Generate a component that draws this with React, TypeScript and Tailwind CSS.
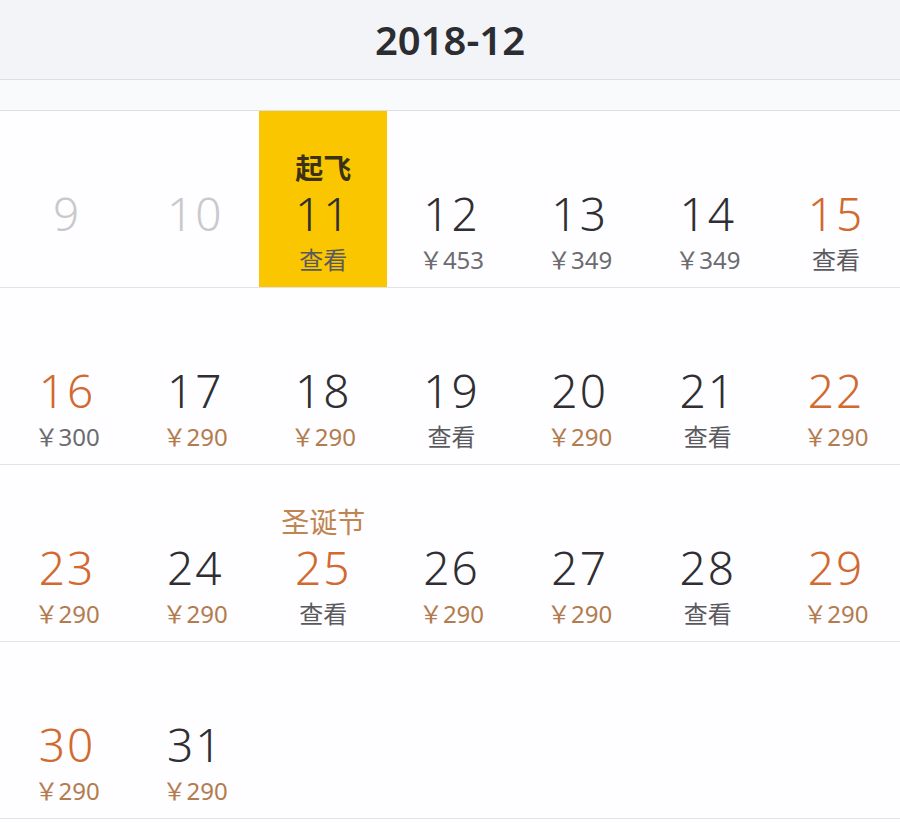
import React from "react";

type Cell = {
  day?: number;
  label?: string;
  labelKind?: "dark" | "orange";
  price?: string;
  priceKind?: "grey" | "orange" | "view";
  numKind?: "dark" | "orange" | "faded";
  highlight?: boolean;
};

const rows: Cell[][] = [
  [
    { day: 9, numKind: "faded" },
    { day: 10, numKind: "faded" },
    { day: 11, numKind: "dark", label: "起飞", labelKind: "dark", price: "查看", priceKind: "view", highlight: true },
    { day: 12, numKind: "dark", price: "￥453", priceKind: "grey" },
    { day: 13, numKind: "dark", price: "￥349", priceKind: "grey" },
    { day: 14, numKind: "dark", price: "￥349", priceKind: "grey" },
    { day: 15, numKind: "orange", price: "查看", priceKind: "view" },
  ],
  [
    { day: 16, numKind: "orange", price: "￥300", priceKind: "grey" },
    { day: 17, numKind: "dark", price: "￥290", priceKind: "orange" },
    { day: 18, numKind: "dark", price: "￥290", priceKind: "orange" },
    { day: 19, numKind: "dark", price: "查看", priceKind: "view" },
    { day: 20, numKind: "dark", price: "￥290", priceKind: "orange" },
    { day: 21, numKind: "dark", price: "查看", priceKind: "view" },
    { day: 22, numKind: "orange", price: "￥290", priceKind: "orange" },
  ],
  [
    { day: 23, numKind: "orange", price: "￥290", priceKind: "orange" },
    { day: 24, numKind: "dark", price: "￥290", priceKind: "orange" },
    { day: 25, numKind: "orange", label: "圣诞节", labelKind: "orange", price: "查看", priceKind: "view" },
    { day: 26, numKind: "dark", price: "￥290", priceKind: "orange" },
    { day: 27, numKind: "dark", price: "￥290", priceKind: "orange" },
    { day: 28, numKind: "dark", price: "查看", priceKind: "view" },
    { day: 29, numKind: "orange", price: "￥290", priceKind: "orange" },
  ],
  [
    { day: 30, numKind: "orange", price: "￥290", priceKind: "orange" },
    { day: 31, numKind: "dark", price: "￥290", priceKind: "orange" },
    {},
    {},
    {},
    {},
    {},
  ],
];

const numClass: Record<string, string> = {
  dark: "text-[#2f2f33]",
  orange: "text-[#d2692e]",
  faded: "text-[#c9c9cb]",
};

const priceClass: Record<string, string> = {
  grey: "text-[#6b6b70]",
  orange: "text-[#b27c4e]",
  view: "text-[#5a5a5e]",
};

function DayCell({ c }: { c: Cell }) {
  return (
    <div
      className={
        "flex flex-col items-center " + (c.highlight ? "bg-[#fac600]" : "")
      }
    >
      <div className="h-[43px]" />
      <div
        className={
          "h-[28px] flex items-center justify-center text-[28px] leading-none " +
          (c.labelKind === "dark"
            ? "font-bold text-[#3b3216]"
            : "text-[#be8550]")
        }
      >
        {c.label ?? ""}
      </div>
      <div
        className={
          "h-[46px] mt-[8px] flex items-center justify-center text-[46px] font-light leading-none tracking-[2px] " +
          (c.numKind ? numClass[c.numKind] : "")
        }
      >
        {c.day ?? ""}
      </div>
      <div
        className={
          "h-[28px] mt-[10px] flex items-center justify-center text-[24px] leading-none " +
          (c.priceKind ? priceClass[c.priceKind] : "")
        }
      >
        {c.price ?? ""}
      </div>
    </div>
  );
}

export default function App() {
  return (
    <div
      className="w-[900px] h-[822px] bg-[#fdfcfe] overflow-hidden"
      style={{ fontFamily: '"Noto Sans", "Noto Sans CJK SC", sans-serif' }}
    >
      <div className="h-[80px] bg-[#f2f4f8] border-b border-[#dcdde1] flex items-center justify-center">
        <span className="text-[40px] font-semibold text-[#2c2d31] leading-none">
          2018-12
        </span>
      </div>
      <div className="h-[31px] bg-[#f9fafc] border-b border-[#dedfe2]" />
      {rows.map((r, i) => (
        <div
          key={i}
          className="h-[177px] grid grid-cols-7 pl-[3px] border-b border-[#e3e3e6] bg-[#fefdff]"
        >
          {r.map((c, j) => (
            <DayCell key={j} c={c} />
          ))}
        </div>
      ))}
    </div>
  );
}
